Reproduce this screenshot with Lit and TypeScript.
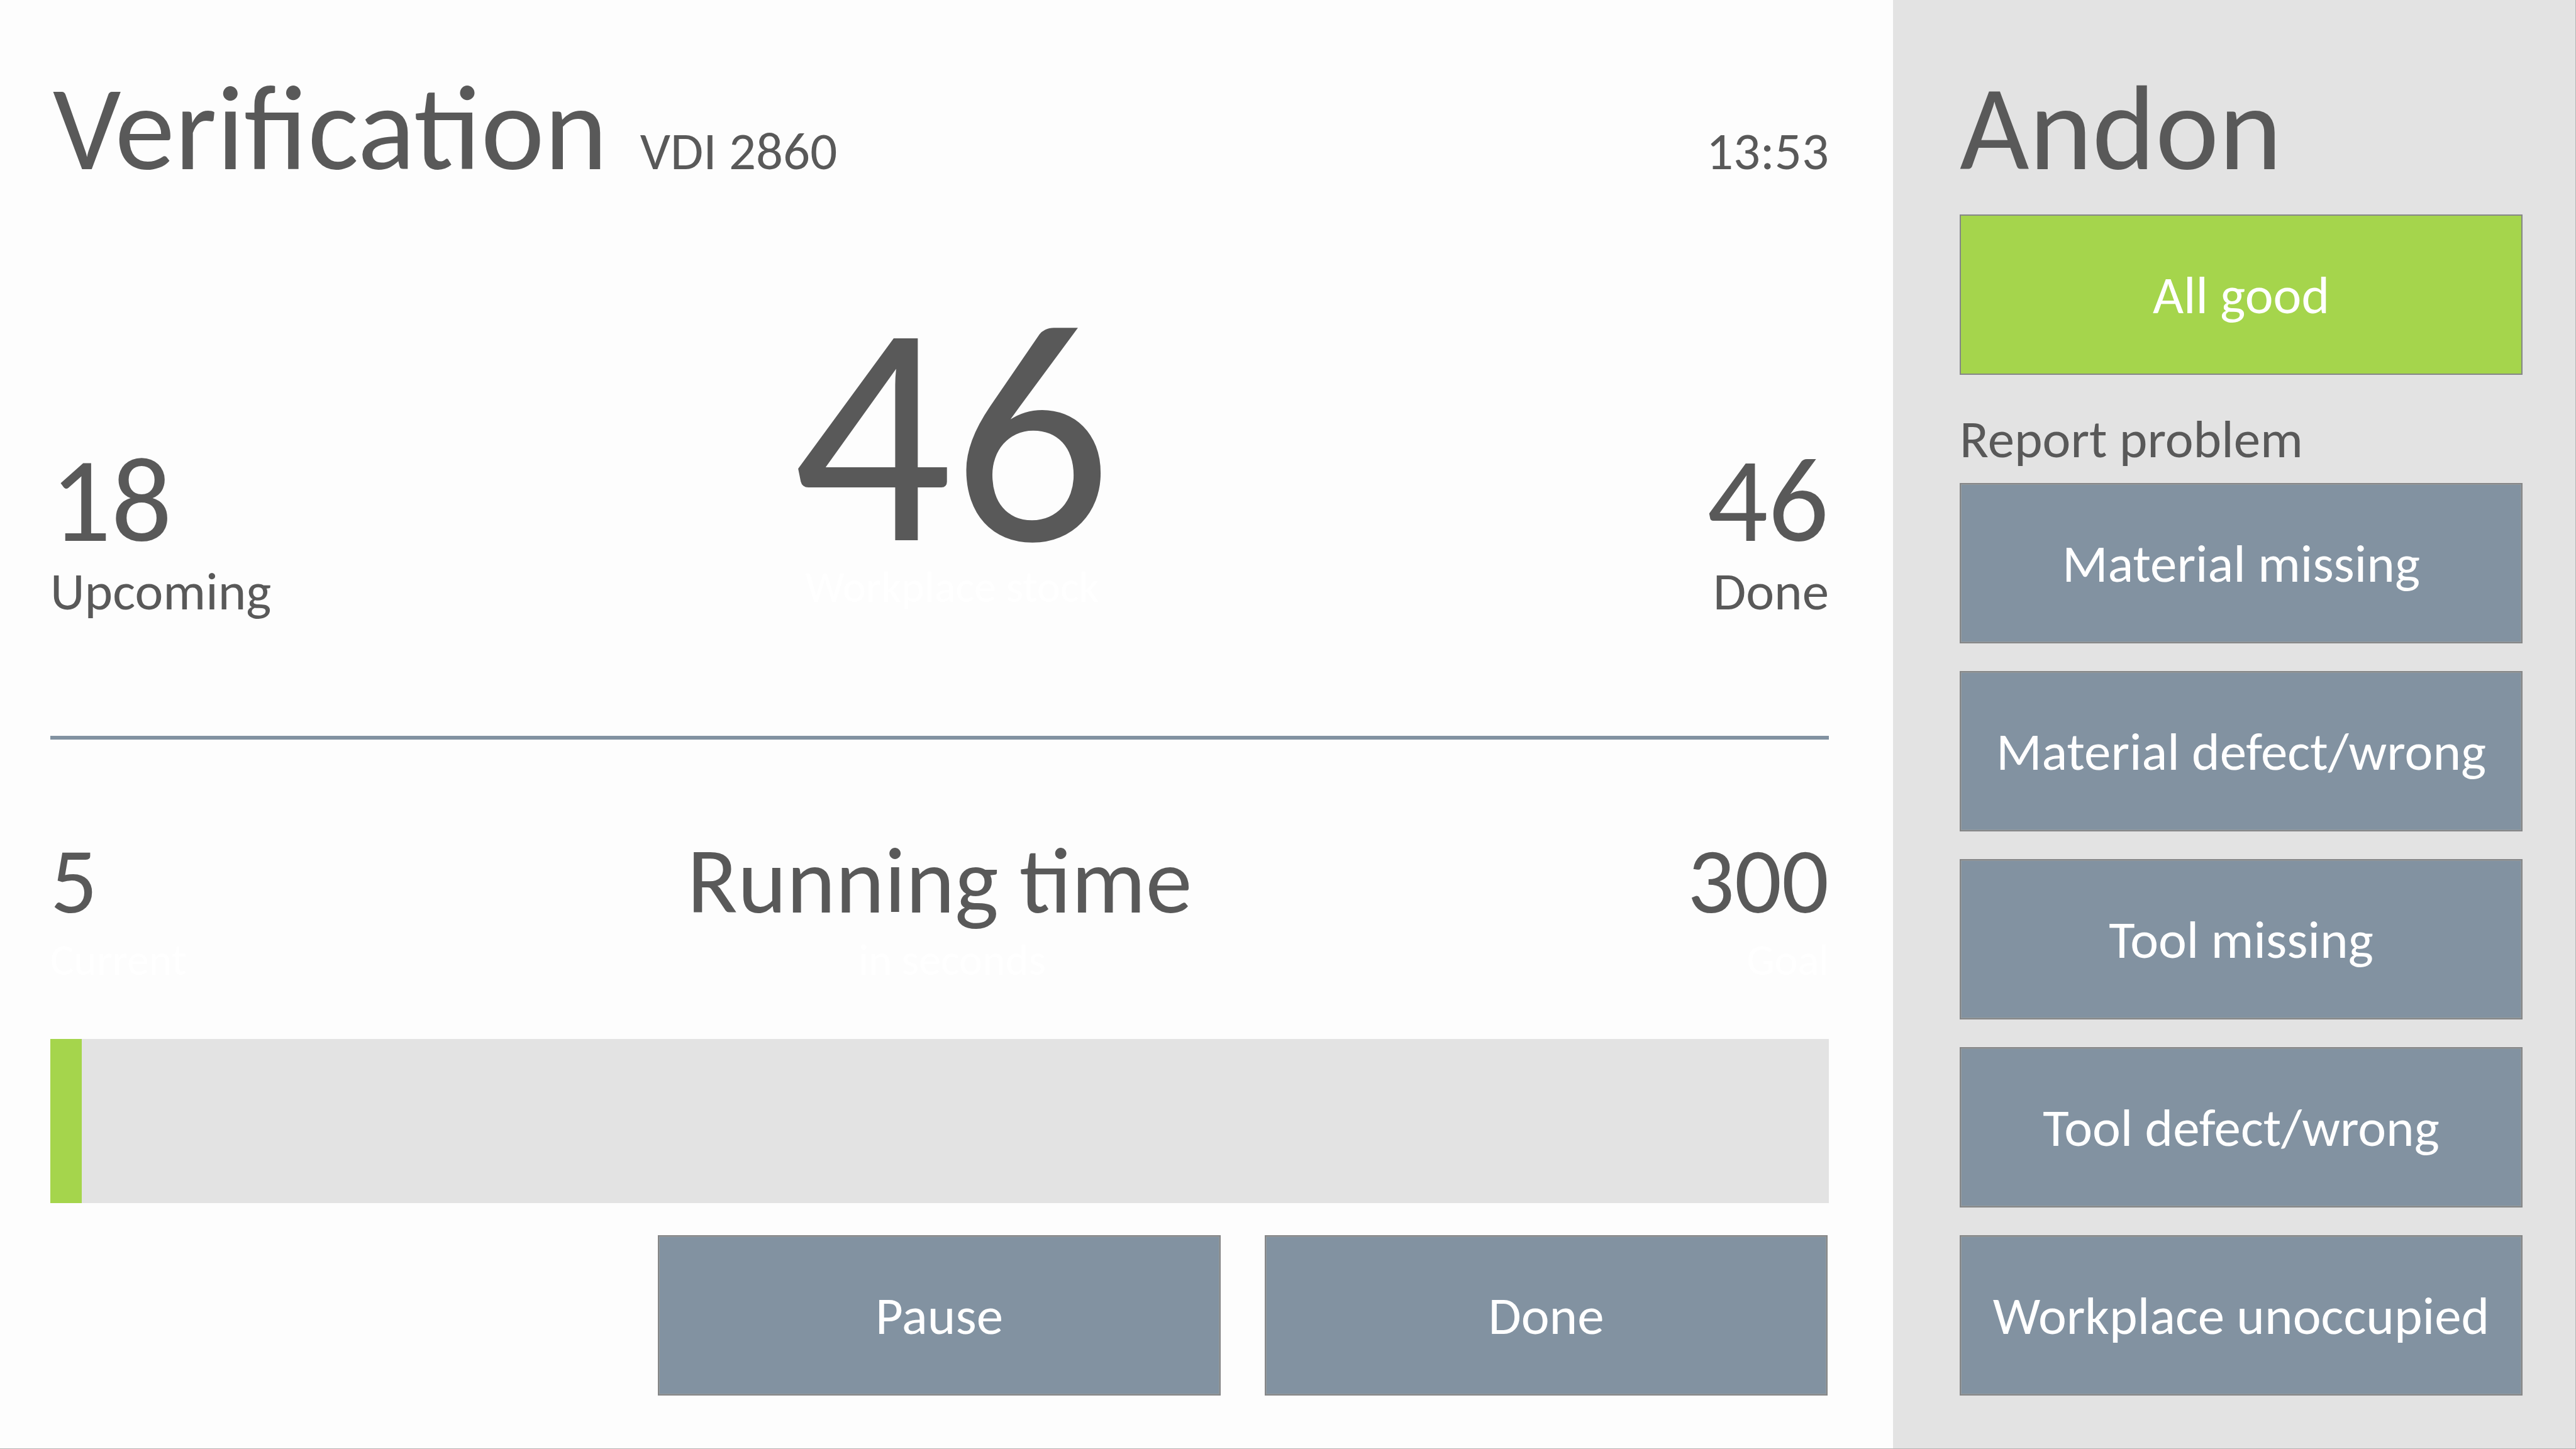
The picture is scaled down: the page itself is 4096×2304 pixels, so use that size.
import { LitElement, html, css } from "lit";
import { customElement, property, state } from "lit/decorators.js";

type Align = "start" | "center" | "end";

@customElement("stat-figure")
class StatFigure extends LitElement {
  @property() value = "";
  @property() label = "";
  @property({ reflect: true }) align: Align = "start";
  @property({ type: Boolean, reflect: true }) hero = false;

  static styles = css`
    :host {
      display: flex;
      flex-direction: column;
      gap: 8px;
      align-items: flex-start;
    }
    :host([align="center"]) {
      align-items: center;
      padding-left: 40px;
    }
    :host([align="end"]) {
      align-items: flex-end;
    }
    .value {
      font-size: 191px;
      line-height: 191px;
    }
    .label {
      height: 85px;
      font-size: 85px;
      line-height: 85px;
    }
    :host([hero]) .value {
      font-size: 500px;
      line-height: 404px;
    }
    :host([hero]) .label {
      font-size: 70px;
      line-height: 70px;
      color: #ffffff;
    }
  `;

  render() {
    return html`
      <div class="value">${this.value}</div>
      <div class="label">${this.label}</div>
    `;
  }
}

@customElement("app-root")
class AppRoot extends LitElement {
  @state() private current = 5;
  @state() private goal = 300;
  @state() private progress = 1.77;
  @state() private problems = [
    "Material missing",
    "Material defect/wrong",
    "Tool missing",
    "Tool defect/wrong",
    "Workplace unoccupied",
  ];

  static styles = css`
    :host {
      display: grid;
      grid-template-columns: minmax(0, 3010fr) minmax(0, 1085fr);
      box-sizing: border-box;
      min-height: 100vh;
      border-right: 1px solid #b4b4b4;
      border-bottom: 1px solid #b4b4b4;
      background: #fdfdfd;
      color: #595959;
      font-family: Calibri, Carlito, Lato, sans-serif;
    }
    .main {
      padding: 108px 102px 84px 80px;
    }
    .andon {
      padding: 108px 84px 84px 106px;
      background: #e3e3e3;
    }
    h1,
    h2,
    h3 {
      margin: 0;
      font-weight: 400;
    }
    .title {
      font-size: 191px;
      line-height: 191px;
    }
    .header {
      display: flex;
      align-items: baseline;
      gap: 52px;
      padding-left: 4px;
    }
    .small {
      font-size: 85px;
      line-height: 85px;
    }
    .clock {
      margin-left: auto;
    }
    .row {
      display: grid;
      grid-template-columns: minmax(0, 1fr) auto minmax(0, 1fr);
      align-items: end;
    }
    .stock {
      margin-top: 187px;
    }
    .rule {
      height: 6px;
      margin: 187px 0 150px;
      border: 0;
      background: #8292a1;
    }
    .time {
      display: flex;
      flex-direction: column;
      gap: 15px;
      font-size: 148px;
      line-height: 150px;
    }
    .time.center {
      align-items: center;
    }
    .time.end {
      align-items: flex-end;
    }
    .time h2 {
      font-size: 148px;
    }
    .time .hint {
      font-size: 70px;
      line-height: 70px;
      color: #ffffff;
    }
    .center .hint {
      padding-left: 40px;
    }
    .track {
      height: 261px;
      margin-top: 91px;
      background: #e3e3e3;
    }
    .fill {
      height: 100%;
      background: #a5d54c;
    }
    .actions {
      display: flex;
      justify-content: flex-end;
      gap: 70px;
      margin-top: 51px;
      padding-right: 2px;
    }
    .actions .button {
      flex: 0 1 895px;
    }
    .button {
      box-sizing: border-box;
      height: 255px;
      padding: 2px 0 0;
      border: 2px solid #858687;
      border-radius: 0;
      background: #8292a1;
      box-shadow: inset 0 0 0 1px #959c9f;
      color: #ffffff;
      font-family: inherit;
      font-size: 85px;
      line-height: 85px;
      cursor: pointer;
    }
    .good {
      width: 100%;
      margin: 42px 0 60px;
      background: #a5d54c;
      box-shadow: none;
    }
    .problems {
      display: flex;
      flex-direction: column;
      gap: 44px;
      margin-top: 27px;
    }
  `;

  render() {
    return html`
      <main class="main">
        <header class="header">
          <h1 class="title">Verification</h1>
          <span class="small">VDI 2860</span>
          <time class="small clock">13:53</time>
        </header>

        <section class="row stock">
          <stat-figure value="18" label="Upcoming"></stat-figure>
          <stat-figure value="46" label="Workplace stock" align="center" hero></stat-figure>
          <stat-figure value="46" label="Done" align="end"></stat-figure>
        </section>

        <hr class="rule" />

        <section class="row">
          <div class="time">
            <span>${this.current}</span>
            <span class="hint">Current</span>
          </div>
          <div class="time center">
            <h2>Running time</h2>
            <span class="hint">in seconds</span>
          </div>
          <div class="time end">
            <span>${this.goal}</span>
            <span class="hint">Goal</span>
          </div>
        </section>

        <div
          class="track"
          role="progressbar"
          aria-label="Running time"
          aria-valuemin="0"
          aria-valuenow=${this.current}
          aria-valuemax=${this.goal}
        >
          <div class="fill" style="width: ${this.progress}%"></div>
        </div>

        <div class="actions">
          <button class="button" type="button">Pause</button>
          <button class="button" type="button">Done</button>
        </div>
      </main>

      <aside class="andon">
        <h2 class="title">Andon</h2>
        <button class="button good" type="button">All good</button>
        <h3 class="small">Report problem</h3>
        <div class="problems">
          ${this.problems.map(
            (name) => html`<button class="button" type="button">${name}</button>`,
          )}
        </div>
      </aside>
    `;
  }
}
